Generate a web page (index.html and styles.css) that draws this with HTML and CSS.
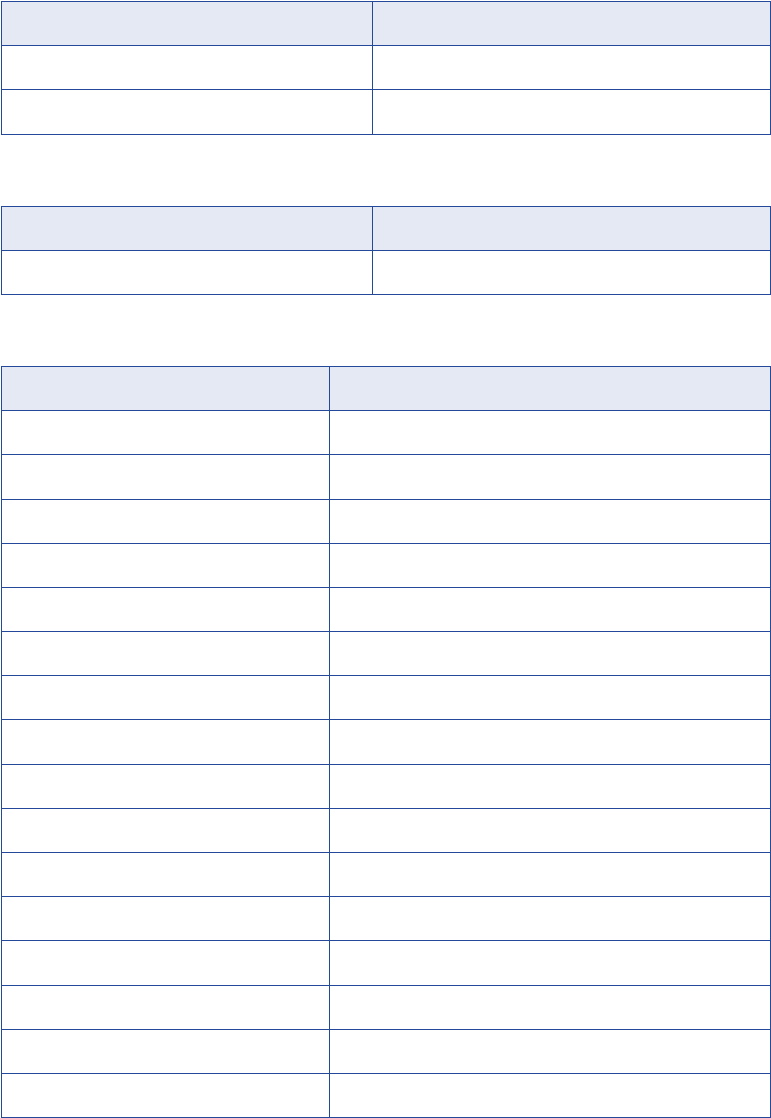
FILE: index.html
```html
<!DOCTYPE html>
<html lang="en">
<head>
    <meta charset="UTF-8">
    <meta name="viewport" content="width=device-width, initial-scale=1.0">
    <title>Tables</title>
    <link rel="stylesheet" href="styles.css">
</head>
<body>
    <table class="grid wide">
        <tr class="head"><th></th><th></th></tr>
        <tr><td></td><td></td></tr>
        <tr><td></td><td></td></tr>
    </table>

    <table class="grid wide">
        <tr class="head"><th></th><th></th></tr>
        <tr><td></td><td></td></tr>
    </table>

    <table class="grid narrow">
        <tr class="head"><th></th><th></th></tr>
        <tr><td></td><td></td></tr>
        <tr><td></td><td></td></tr>
        <tr><td></td><td></td></tr>
        <tr><td></td><td></td></tr>
        <tr><td></td><td></td></tr>
        <tr><td></td><td></td></tr>
        <tr><td></td><td></td></tr>
        <tr><td></td><td></td></tr>
        <tr><td></td><td></td></tr>
        <tr><td></td><td></td></tr>
        <tr><td></td><td></td></tr>
        <tr><td></td><td></td></tr>
        <tr><td></td><td></td></tr>
        <tr><td></td><td></td></tr>
        <tr><td></td><td></td></tr>
        <tr><td></td><td></td></tr>
    </table>
</body>
</html>
```

FILE: styles.css
```css
body {
    background-color: #ffffff;
    font-family: "Liberation Sans", Arial, sans-serif;
    margin: 0;
    padding: 1px 0 0 1px;
}
.grid {
    border-collapse: collapse;
    table-layout: fixed;
    width: 770px;
    margin-bottom: 71px;
}
.grid:last-child {
    margin-bottom: 0;
}
.grid th, .grid td {
    border: 1px solid #24499a;
    padding: 0;
    height: 43.2px;
}
.grid .head th {
    background-color: #e4e9f4;
}
.wide th:first-child {
    width: 370px;
}
.narrow th:first-child {
    width: 327px;
}
```
